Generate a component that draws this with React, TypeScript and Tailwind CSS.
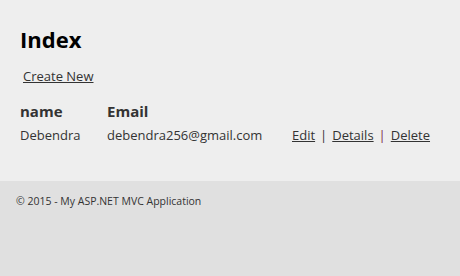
export default function App() {
    const font = { fontFamily: '"Open Sans", "Noto Sans", sans-serif' };
    return (
        <div className="flex h-[276px] w-[460px] flex-col bg-[#eeeeee] text-[#333333]" style={font}>
            <div className="h-[181px] shrink-0 px-[20px] pt-[23px]">
                <h1 className="text-[22px] font-bold leading-[32px] text-black">Index</h1>
                <p className="mt-[12px] pl-[3px] text-[13px] leading-[18px]">
                    <a href="#" className="underline">Create New</a>
                </p>
                <table className="mt-[15px] text-[13px]">
                    <thead>
                        <tr>
                            <th className="w-[87px] p-0 text-left text-[15px] leading-[22px] font-bold">name</th>
                            <th className="w-[185px] p-0 text-left text-[15px] leading-[22px] font-bold">Email</th>
                            <th className="p-0" />
                        </tr>
                    </thead>
                    <tbody>
                        <tr>
                            <td className="p-0 pt-[3px] leading-[20px]">Debendra</td>
                            <td className="p-0 pt-[3px] leading-[20px]">debendra256@gmail.com</td>
                            <td className="p-0 pt-[3px] leading-[20px]">
                                <a href="#" className="underline">Edit</a>
                                <span className="mx-[5px]">|</span>
                                <a href="#" className="underline">Details</a>
                                <span className="mx-[5px] text-[#7a2a4a]">|</span>
                                <a href="#" className="underline">Delete</a>
                            </td>
                        </tr>
                    </tbody>
                </table>
            </div>
            <footer className="flex-1 bg-[#e0e0e0] px-[16px] pt-[12px]">
                <p className="text-[10.5px] leading-[16px]">© 2015 - My ASP.NET MVC Application</p>
            </footer>
        </div>
    );
}
